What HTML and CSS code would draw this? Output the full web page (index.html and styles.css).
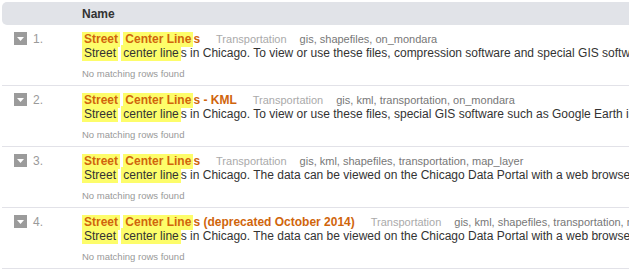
FILE: index.html
```html
<!DOCTYPE html>
<html>
<head>
<meta charset="utf-8">
<link rel="stylesheet" href="styles.css">
</head>
<body>
<div class="results">
  <div class="header"><span class="header-name">Name</span></div>

  <div class="row">
    <div class="lead"><span class="toggle"><svg width="13" height="13" viewBox="0 0 13 13"><rect width="13" height="13" fill="#9b9b9b"/><path d="M3 5h7l-3.5 4z" fill="#fff"/></svg></span><span class="num">1.</span></div>
    <div class="main">
      <div class="title-line"><span class="title"><span class="hl">Street</span> <span class="hl"> Center Line</span>s</span><span class="cat">Transportation</span><span class="tags">gis, shapefiles, on_mondara</span></div>
      <div class="desc"><span class="hl">Street</span> <span class="hl"> center line</span>s in Chicago. To view or use these files, compression software and special GIS software, such as ESRI ArcGIS, is required.</div>
      <div class="note">No matching rows found</div>
    </div>
  </div>

  <div class="row">
    <div class="lead"><span class="toggle"><svg width="13" height="13" viewBox="0 0 13 13"><rect width="13" height="13" fill="#9b9b9b"/><path d="M3 5h7l-3.5 4z" fill="#fff"/></svg></span><span class="num">2.</span></div>
    <div class="main">
      <div class="title-line"><span class="title"><span class="hl">Street</span> <span class="hl"> Center Line</span>s - KML</span><span class="cat">Transportation</span><span class="tags">gis, kml, transportation, on_mondara</span></div>
      <div class="desc"><span class="hl">Street</span> <span class="hl"> center line</span>s in Chicago. To view or use these files, special GIS software such as Google Earth is required.</div>
      <div class="note">No matching rows found</div>
    </div>
  </div>

  <div class="row">
    <div class="lead"><span class="toggle"><svg width="13" height="13" viewBox="0 0 13 13"><rect width="13" height="13" fill="#9b9b9b"/><path d="M3 5h7l-3.5 4z" fill="#fff"/></svg></span><span class="num">3.</span></div>
    <div class="main">
      <div class="title-line"><span class="title"><span class="hl">Street</span> <span class="hl"> Center Line</span>s</span><span class="cat">Transportation</span><span class="tags">gis, kml, shapefiles, transportation, map_layer</span></div>
      <div class="desc"><span class="hl">Street</span> <span class="hl"> center line</span>s in Chicago. The data can be viewed on the Chicago Data Portal with a web browser.</div>
      <div class="note">No matching rows found</div>
    </div>
  </div>

  <div class="row">
    <div class="lead"><span class="toggle"><svg width="13" height="13" viewBox="0 0 13 13"><rect width="13" height="13" fill="#9b9b9b"/><path d="M3 5h7l-3.5 4z" fill="#fff"/></svg></span><span class="num">4.</span></div>
    <div class="main">
      <div class="title-line"><span class="title"><span class="hl">Street</span> <span class="hl"> Center Line</span>s (deprecated October 2014)</span><span class="cat">Transportation</span><span class="tags">gis, kml, shapefiles, transportation, map_layer</span></div>
      <div class="desc"><span class="hl">Street</span> <span class="hl"> center line</span>s in Chicago. The data can be viewed on the Chicago Data Portal with a web browser.</div>
      <div class="note">No matching rows found</div>
    </div>
  </div>
</div>
</body>
</html>
```

FILE: styles.css
```css
html, body {
  margin: 0;
  padding: 0;
  overflow: hidden;
  background: #fff;
}

body {
  font-family: "Liberation Sans", Arial, sans-serif;
  font-size: 12px;
  color: #333;
}

.results {
  padding: 2px 0 0 2px;
  width: 700px;
}

.header {
  height: 23px;
  background: #e1e3e8;
  border-radius: 5px 0 0 5px;
  display: flex;
  align-items: center;
  padding-left: 80px;
}

.header-name {
  font-weight: bold;
  font-size: 12px;
  color: #333;
}

.row {
  display: flex;
  border-bottom: 1px solid #e2e2e8;
  padding: 7px 0 4px;
  height: 49px;
}

.lead {
  width: 80px;
  flex: none;
  display: flex;
  align-items: flex-start;
  padding-left: 12px;
  box-sizing: border-box;
  height: 14px;
}

.toggle {
  display: block;
  width: 13px;
  height: 13px;
  margin-top: 0;
}

.toggle svg {
  display: block;
}

.num {
  margin-left: 6px;
  color: #9a9a9a;
  font-size: 12px;
  line-height: 14px;
}

.main {
  white-space: nowrap;
  overflow: hidden;
  flex: 1;
}

.title-line {
  line-height: 14px;
  height: 14px;
}

.title {
  font-weight: bold;
  color: #d0650c;
}

.hl {
  background: #fdfd6a;
  padding: 1px 2px;
}

.cat {
  margin-left: 16px;
  font-size: 11px;
  color: #aaa;
}

.tags {
  margin-left: 13px;
  font-size: 11px;
  color: #777;
}

.desc {
  line-height: 14px;
  height: 14px;
  color: #333;
}

.note {
  margin-top: 7px;
  font-size: 9.5px;
  line-height: 14px;
  color: #999;
}
```
